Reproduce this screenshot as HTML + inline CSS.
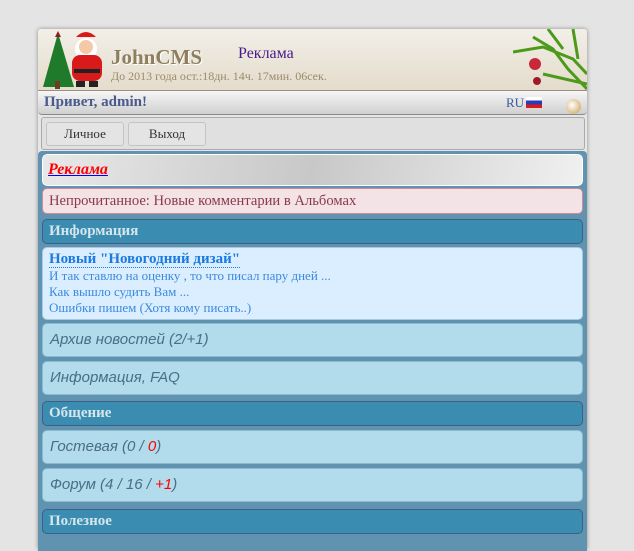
<!DOCTYPE html>
<html><head><meta charset="utf-8"><style>
body{margin:0;background:#e4e4e4;width:634px;height:530px;overflow:hidden;font-family:"Liberation Serif",serif;}
#wrap{position:absolute;left:38px;top:29px;width:549px;height:520px;background:#e6e6e6;box-shadow:0 0 4px rgba(0,0,0,.4);border-radius:3px 3px 0 0;}
#blue{position:absolute;left:0;top:122px;width:549px;height:400px;background:#5f93b0;border-radius:4px 4px 0 0;}
#head{position:absolute;left:0;top:0;width:549px;height:61px;background:linear-gradient(#f2efe8,#e4dccc);border-bottom:1px solid #9a9080;border-radius:3px 3px 0 0;}
#greet{position:absolute;left:0;top:62px;width:549px;height:23px;background:linear-gradient(#f6f6f6,#d0d0d0);border-bottom:1px solid #888;border-radius:0 0 4px 4px;}
#menu{position:absolute;left:3px;top:88px;width:542px;height:31px;background:#e0e0e0;border:1px solid #aaa;border-radius:3px;}
.btn{position:absolute;top:4px;height:22px;background:#e4e4e4;border:1px solid #c4c4c4;border-radius:3px;font-size:13px;color:#333;text-align:center;line-height:22px;}
.box{position:absolute;left:4px;width:541px;border-radius:5px;box-sizing:border-box;}
.it{background:#b2dbeb;border:1px solid #8bbad0;font:italic 15px "Liberation Sans",sans-serif;color:#4a6e86;padding-left:7px;line-height:32px;height:34px;}
.hd{background:#3a8cb0;border:1px solid #3d5f86;color:#d6e6ee;font-weight:bold;font-size:15px;padding-left:6px;line-height:23px;height:25px;}
</style></head><body>
<div id="wrap">
<div id="blue"></div>
<div id="head">
 <svg style="position:absolute;left:0;top:0" width="75" height="61">
  <polygon points="20,4 5,58 36,58" fill="#1f7a2a"/>
  <polygon points="20,2 17,8 23,8" fill="#8a2020"/>
  <rect x="17" y="52" width="5" height="8" fill="#6b4020"/>
  <circle cx="48" cy="20" r="11" fill="#fff"/>
  <rect x="34" y="26" width="30" height="26" rx="8" fill="#d81a1a"/>
  <circle cx="48" cy="18" r="7" fill="#f4c9a8"/>
  <path d="M38,8 Q48,-2 58,8 Z" fill="#d81a1a"/>
  <rect x="36" y="40" width="26" height="4" fill="#222"/>
  <rect x="38" y="52" width="9" height="6" fill="#222"/><rect x="51" y="52" width="9" height="6" fill="#222"/>
 </svg>
 <div style="position:absolute;left:73px;top:16px;font:bold 21px 'Liberation Serif',serif;color:#8e7d5e;text-shadow:1px 1px 0 #fff;">JohnCMS</div>
 <div style="position:absolute;left:200px;top:16px;font-size:16px;color:#4a1a8a;">Реклама</div>
 <div style="position:absolute;left:73px;top:40px;font-size:12px;color:#9b8a6a;">До 2013 года ост.:18дн. 14ч. 17мин. 06сек.</div>
 <svg style="position:absolute;left:475px;top:0" width="74" height="90">
  <g stroke="#4c9a1a" stroke-width="3" fill="none">
   <path d="M0,23 L30,18 L60,30 L74,45"/><path d="M20,8 L40,20 L55,40 L74,60"/><path d="M35,0 L50,20"/><path d="M60,0 L65,30"/><path d="M30,45 L74,55"/>
  </g>
  <circle cx="22" cy="35" r="6" fill="#c8283c"/><circle cx="24" cy="52" r="4" fill="#a01a2a"/>
 </svg>
</div>
<div id="greet">
 <div style="position:absolute;left:6px;top:3px;font:bold 15px 'Liberation Serif',serif;color:#4a5a8a;">Привет, admin!</div>
 <div style="position:absolute;left:468px;top:4px;font-size:13px;color:#3a5a9a;">RU</div>
 <div style="position:absolute;left:488px;top:6px;width:16px;height:11px;background:linear-gradient(#fff 33%,#2a3ab8 33% 66%,#d81a1a 66%);"></div>
 <div style="position:absolute;left:528px;top:8px;width:15px;height:15px;border-radius:50%;background:radial-gradient(circle at 40% 40%,#fff,#c89a4a);"></div>
</div>
<div id="menu">
 <div class="btn" style="left:4px;width:76px;">Личное</div>
 <div class="btn" style="left:86px;width:76px;">Выход</div>
</div>
<div class="box" style="top:125px;height:32px;background:linear-gradient(100deg,#e8e8e8,#c8c8c8 50%,#f0f0f0);border:1px solid #fff;outline:1px solid #5f93b0;padding-left:5px;line-height:30px;"><span style="font:italic bold 16px 'Liberation Serif',serif;color:#f00;text-decoration:underline;text-decoration-color:#00f;">Реклама</span></div>
<div class="box" style="top:159px;height:26px;background:#f3e2e6;border:1px solid #d08a98;padding-left:6px;line-height:24px;font-size:14.6px;color:#8a3a4a;">Непрочитанное: Новые комментарии в Альбомах</div>
<div class="box hd" style="top:190px;">Информация</div>
<div class="box" style="top:218px;height:73px;background:#dbeeff;border:1px solid #a9c9e0;padding:3px 0 0 6px;font-size:13px;color:#3a8ae0;line-height:16px;">
 <div style="font:bold 15px 'Liberation Serif',serif;color:#1a7ae0;border-bottom:1px dotted #1a7ae0;display:inline-block;line-height:16px;">Новый "Новогодний дизай"</div>
 <div>И так ставлю на оценку , то что писал пару дней ...</div>
 <div>Как вышло судить Вам ...</div>
 <div>Ошибки пишем (Хотя кому писать..)</div>
</div>
<div class="box it" style="top:294px;">Архив новостей (2/+1)</div>
<div class="box it" style="top:332px;">Информация, FAQ</div>
<div class="box hd" style="top:372px;">Общение</div>
<div class="box it" style="top:401px;">Гостевая (0 / <span style="color:#f00">0</span>)</div>
<div class="box it" style="top:439px;">Форум (4 / 16 / <span style="color:#f00">+1</span>)</div>
<div class="box hd" style="top:480px;">Полезное</div>
</div>
</body></html>
